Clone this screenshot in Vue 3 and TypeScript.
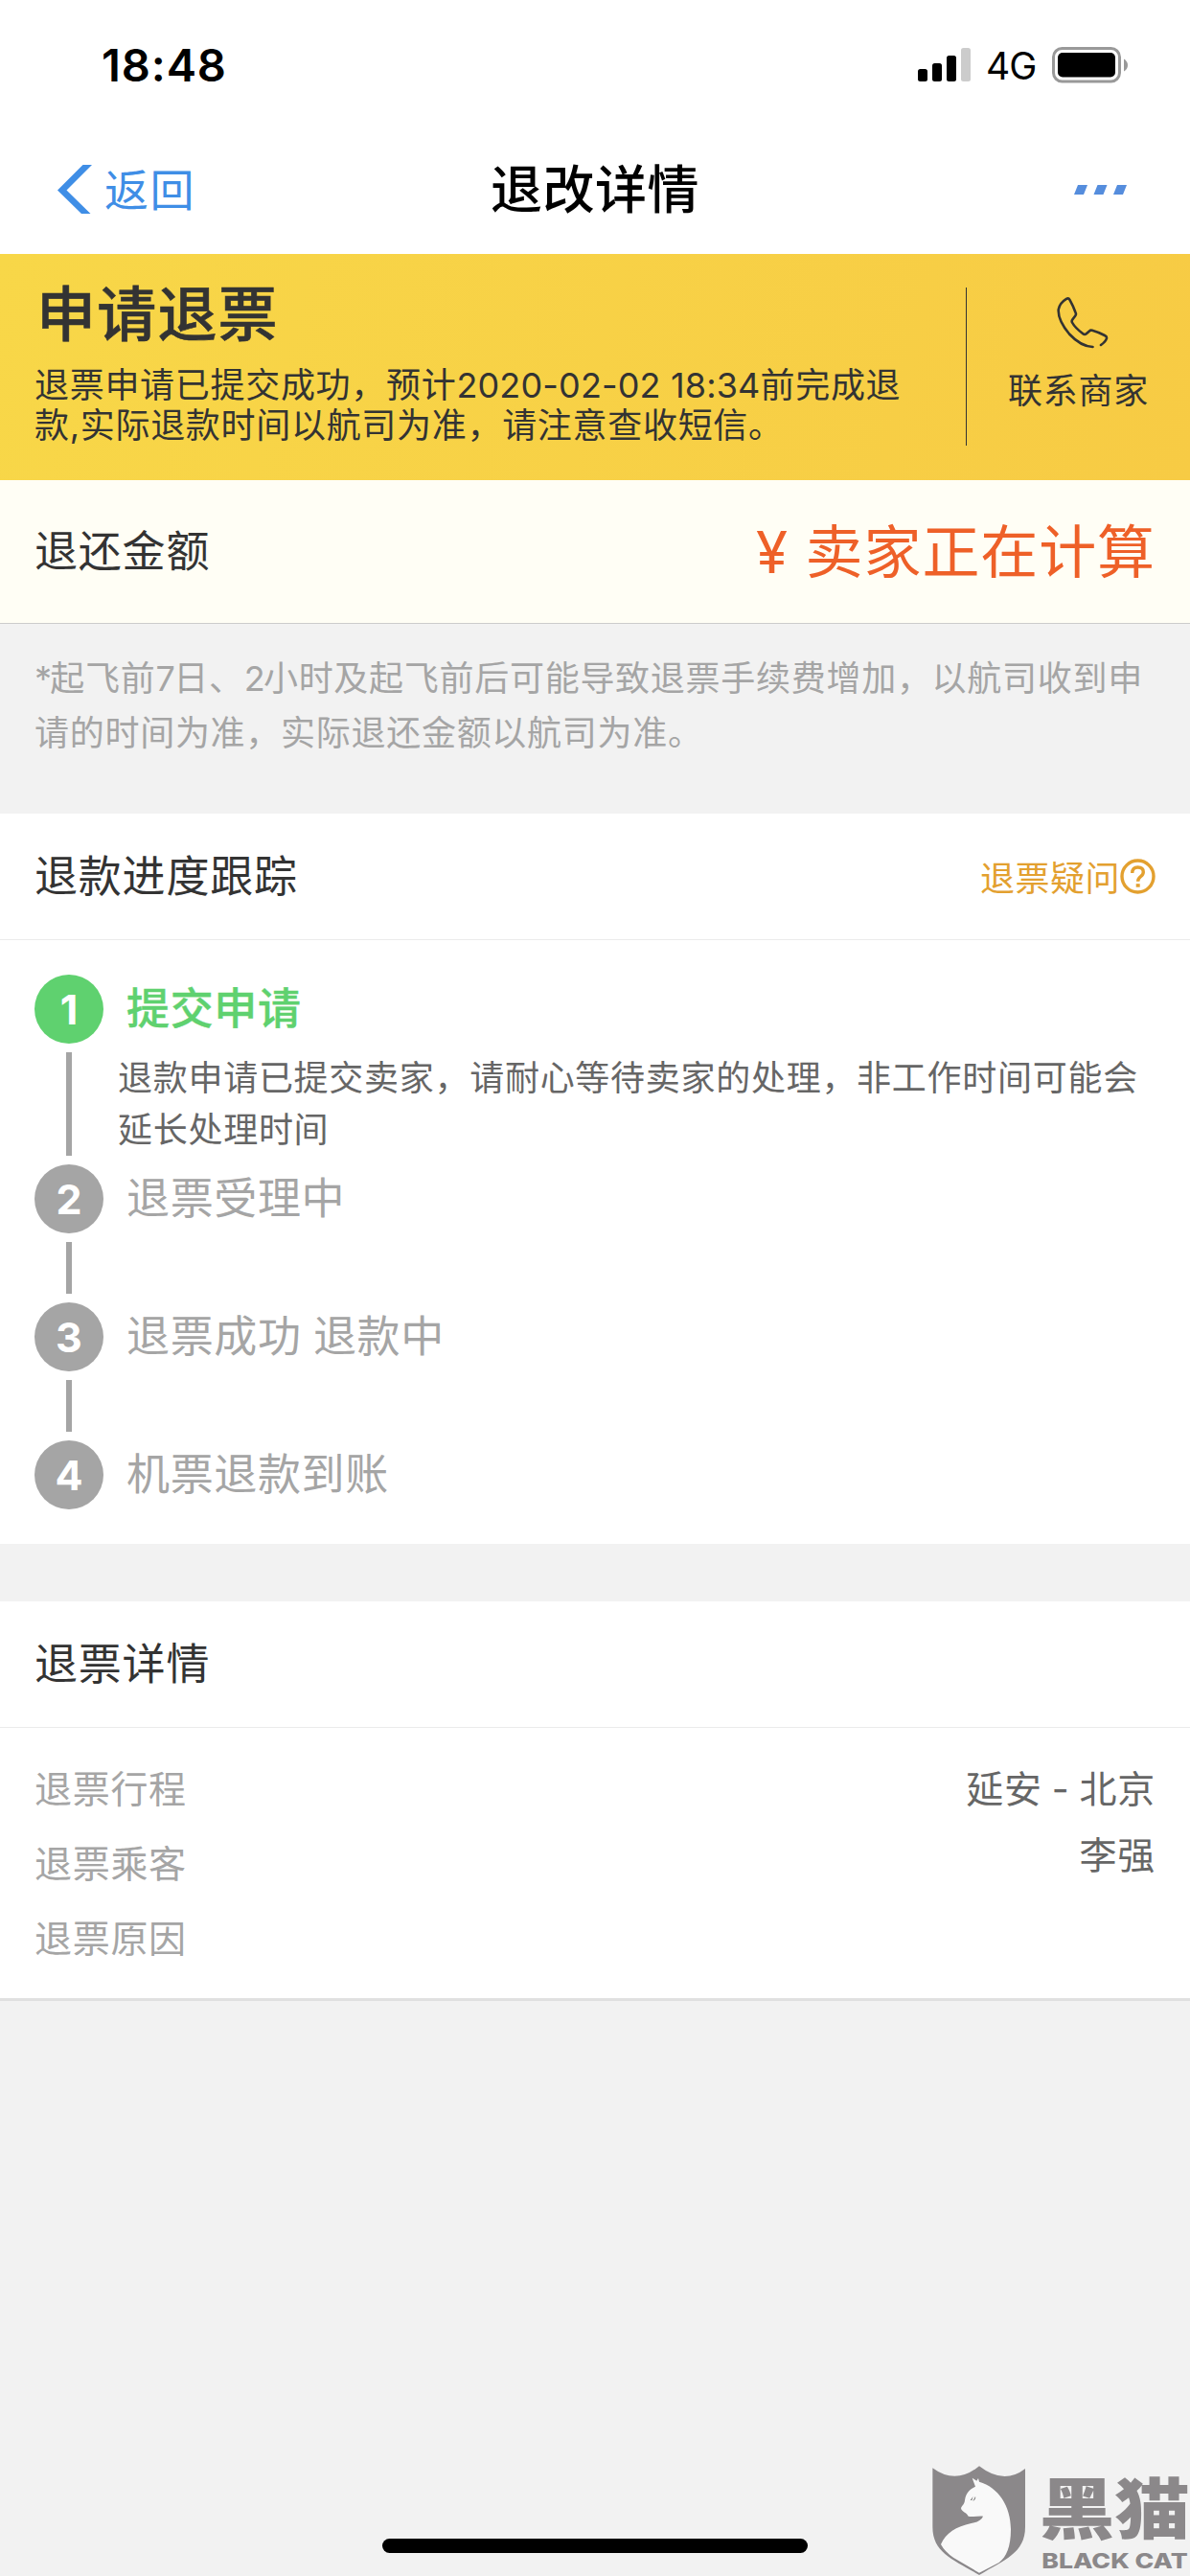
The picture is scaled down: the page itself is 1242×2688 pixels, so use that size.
<script setup lang="ts">
interface Step {
  title: string
  desc?: string
  active?: boolean
}

const steps: Step[] = [
  { title: '提交申请', desc: '退款申请已提交卖家，请耐心等待卖家的处理，非工作时间可能会延长处理时间', active: true },
  { title: '退票受理中' },
  { title: '退票成功 退款中' },
  { title: '机票退款到账' },
]

const labels: string[] = ['退票行程', '退票乘客', '退票原因']
const values: string[] = ['延安 - 北京', '李强']
</script>

<template>
  <div class="page">
    <div class="status-bar">
      <span class="time">18:48</span>
      <div class="indicators">
        <svg class="signal" width="55" height="36" viewBox="0 0 55 36">
          <rect x="0" y="22" width="10" height="13" rx="2.5" />
          <rect x="15" y="16" width="10" height="19" rx="2.5" />
          <rect x="30" y="8" width="10" height="27" rx="2.5" />
          <rect x="45" y="0" width="10" height="35" rx="2.5" fill="#ccc" />
        </svg>
        <span class="network">4G</span>
        <svg class="battery" width="80" height="38" viewBox="0 0 80 38">
          <rect x="1.5" y="1.5" width="69" height="34.5" rx="9" fill="none" stroke="#999" stroke-width="3" />
          <rect x="6" y="6" width="60" height="25.5" rx="5" />
          <path d="M75 12.5 Q79 15 79 19 Q79 23 75 25.500Z" fill="#999" />
        </svg>
      </div>
    </div>

    <nav class="nav">
      <div class="back">
        <svg width="36" height="51" viewBox="0 0 36 51">
          <path d="M26.500 0 H36 L9.500 26.500 L34.500 51 H25 L0 26.500Z" fill="#3f8ee6" />
        </svg>
        <span>返回</span>
      </div>
      <h1>退改详情</h1>
      <div class="more">
        <svg width="55" height="10" viewBox="0 0 55 10">
          <path d="M4 0H14L10 10H0Z M24.500 0H34.500L30.500 10H20.500Z M45 0H55L51 10H41Z" fill="#558ddd" />
        </svg>
      </div>
    </nav>

    <section class="banner">
      <div class="banner-text">
        <h2>申请退票</h2>
        <p>退票申请已提交成功，预计<span class="date">2020-02-02 18:34</span>前完成退<br>款,实际退款时间以航司为准，请注意查收短信。</p>
      </div>
      <div class="contact">
        <svg width="56" height="56" viewBox="-1 -1 56 56">
          <path
            d="M46 50 Q51 46.500 52 43 Q52.300 41 50 40 Q43 36.500 37 34.800 Q35 34.300 34 35.500 L30.800 38.300 Q29 39.700 27 38 Q19 32 16 26.500 Q15.200 25 16.300 23.500 L19.300 19.500 Q20.500 18 19.500 16 Q17 9 13.500 2.800 Q12.300 .6 10 1.800 Q3 6 1.700 13 Q1 24 13 38.500 Q25 51.500 37.500 52"
            fill="none" stroke="#333" stroke-width="2.600" stroke-linecap="round" stroke-linejoin="round"
          />
        </svg>
        <span>联系商家</span>
      </div>
    </section>

    <section class="amount">
      <span class="amount-label">退还金额</span>
      <span class="amount-value">¥ 卖家正在计算</span>
    </section>

    <p class="note"><span class="tight">*</span>起飞前<span class="tight">7</span>日、<span class="tight">2</span>小时及起飞前后可能导致退票手续费增加，以航司收到申<br>请的时间为准，实际退还金额以航司为准。</p>

    <section class="card">
      <header class="card-head">
        <h3>退款进度跟踪</h3>
        <div class="faq">
          <span>退票疑问</span>
          <svg width="37" height="37" viewBox="0 0 37 37" fill="none" stroke="#e3a02f">
            <circle cx="18.500" cy="18.500" r="16.500" stroke-width="3.400" />
            <path d="M12.700 15 Q12.700 9 18.500 9 Q24.300 9 24.300 14 Q24.300 16.500 21.500 18.700 Q18.700 20.800 18.700 23.800" stroke-width="3.400" />
            <path d="M18.700 26.200V29.700" stroke-width="4" />
          </svg>
        </div>
      </header>
      <ol class="steps">
        <li v-for="(step, i) in steps" :key="step.title" class="step" :class="{ active: step.active }">
          <div class="rail">
            <span class="num">{{ i + 1 }}</span>
            <span v-if="i < steps.length - 1" class="line"></span>
          </div>
          <div class="step-body">
            <div class="step-title">{{ step.title }}</div>
            <p v-if="step.desc" class="step-desc">{{ step.desc }}</p>
          </div>
        </li>
      </ol>
    </section>

    <section class="card detail">
      <header class="card-head">
        <h3>退票详情</h3>
      </header>
      <div class="detail-body">
        <div class="labels">
          <span v-for="label in labels" :key="label">{{ label }}</span>
        </div>
        <div class="values">
          <span v-for="value in values" :key="value">{{ value }}</span>
        </div>
      </div>
    </section>

    <svg class="watermark" width="300" height="148" viewBox="0 0 900 444">
      <path d="M94 106 Q167 160 240 100 Q317 160 384 108 V290 C384 372 320 392 240 441 C160 392 94 372 94 290Z" fill="#8b888a" />
      <path
        d="M218 137 L232 146 L237 138 L240 149 C300 166 339 225 339 298 C339 352 325 385 302 402 L240 434 L160 387 Q132 368 120 345 C135 310 168 289 215 279 C236 275 248 268 252 257 C235 256 217 260 206 257 C202 247 184 242 183 232 C184 225 194 220 195 207 C198 185 208 174 228 164Z"
        fill="#f9f9f9"
      />
      <path d="M212 207 L221 195 L217 207Z M220 210 L228 195 Q231 205 220 210Z" fill="#777" />
      <text class="wm-cn" transform="translate(428 311) scale(1.135 1)">黑猫</text>
      <text class="wm-en" x="436" y="420" textLength="457" lengthAdjust="spacingAndGlyphs">BLACK CAT</text>
    </svg>
    <div class="home-indicator"></div>
  </div>
</template>

<style>
body {
  margin: 0;
  background: #f2f2f2;
}
</style>

<style scoped>
.page {
  position: relative;
  box-sizing: border-box;
  width: 1242px;
  height: 2688px;
  overflow: hidden;
  display: flex;
  flex-direction: column;
  background: #f2f2f2;
  color: #333;
  font-family: Inter, "Noto Sans CJK SC", sans-serif;
  white-space: nowrap;
}

h1, h2, h3, p, ol {
  margin: 0;
  padding: 0;
}

.status-bar {
  height: 132px;
  box-sizing: border-box;
  padding: 49px 64px 0 106px;
  display: flex;
  justify-content: space-between;
  align-items: flex-start;
  background: #fff;
  color: #000;
}

.time {
  font-size: 47px;
  line-height: 38px;
  font-weight: 600;
  letter-spacing: 0.900px;
}

.indicators {
  display: flex;
  align-items: flex-start;
}

.signal {
  margin-top: 1px;
}

.network {
  width: 85px;
  padding-left: 16px;
  box-sizing: border-box;
  font-size: 39px;
  line-height: 40px;
  letter-spacing: -1px;
}

.nav {
  height: 133px;
  box-sizing: border-box;
  padding: 0 66px 2px 60px;
  display: grid;
  grid-template-columns: 1fr auto 1fr;
  align-items: center;
  background: #fff;
}

.back {
  display: flex;
  align-items: center;
  gap: 13px;
  color: #3f8ee6;
  font-size: 46px;
  line-height: 60px;
  letter-spacing: 1.500px;
}

h1 {
  padding: 3px 0 0 6px;
  color: #000;
  font-size: 54px;
  line-height: 60px;
  font-weight: 500;
  letter-spacing: 0.500px;
}

.more {
  display: flex;
  justify-content: flex-end;
}

.banner {
  height: 236px;
  box-sizing: border-box;
  padding-left: 36px;
  display: flex;
  background: linear-gradient(105deg, #f8d748, #f7cb44);
}

.banner-text {
  width: 972px;
  padding-top: 31px;
}

h2 {
  padding-left: 2px;
  font-size: 62px;
  line-height: 66px;
  font-weight: 500;
  -webkit-text-stroke: 0.600px #333;
  letter-spacing: 1.200px;
}

.banner-text p {
  margin-top: 19px;
  font-size: 36px;
  line-height: 42px;
  letter-spacing: 0.700px;
}

.date {
  letter-spacing: 0.150px;
}

.contact {
  flex: 1;
  height: 165px;
  box-sizing: border-box;
  margin-top: 35px;
  padding-top: 9px;
  border-left: 1px solid #333;
  display: flex;
  flex-direction: column;
  align-items: center;
  gap: 19px;
  font-size: 36px;
  line-height: 48px;
  letter-spacing: 0.700px;
}

.contact svg {
  margin-left: 8px;
}

.amount {
  height: 150px;
  box-sizing: border-box;
  padding: 0 36px;
  border-bottom: 1px solid #ccc;
  display: flex;
  align-items: center;
  justify-content: space-between;
  background: #fffef5;
}

.amount-label {
  font-size: 45px;
  letter-spacing: 0.800px;
  line-height: 60px;
}

.amount-value {
  color: #ee6028;
  font-size: 60px;
  line-height: 80px;
  letter-spacing: 0.900px;
}

.note {
  height: 198px;
  box-sizing: border-box;
  padding: 29px 36px 0;
  color: #a5a5a5;
  font-size: 36px;
  line-height: 57px;
  letter-spacing: 0.720px;
}

.tight {
  letter-spacing: -1.700px;
}

.card {
  background: #fff;
}

.card-head {
  height: 132px;
  box-sizing: border-box;
  padding: 0 36px;
  border-bottom: 1px solid #ebebeb;
  display: flex;
  align-items: center;
  justify-content: space-between;
}

h3 {
  font-size: 45px;
  line-height: 60px;
  font-weight: 400;
  letter-spacing: 0.800px;
}

.faq {
  display: flex;
  align-items: center;
  color: #e3a02f;
  font-size: 36px;
  line-height: 48px;
  letter-spacing: 0.500px;
}

.faq span {
  padding-top: 4px;
}

.steps {
  list-style: none;
  padding: 36px 36px;
}

.step {
  display: flex;
}

.rail {
  width: 72px;
  display: flex;
  flex-direction: column;
  align-items: center;
}

.num {
  width: 72px;
  height: 72px;
  border-radius: 50%;
  background: #a5a5a5;
  color: #fff;
  font-size: 43px;
  line-height: 72px;
  font-weight: 700;
  text-align: center;
}

.active .num {
  background: #5fd16f;
}

.line {
  width: 6px;
  height: 54px;
  margin: 9px 0;
  background: #a5a5a5;
}

.active .line {
  height: 108px;
}

.step-body {
  padding-left: 15px;
  flex: 1;
}

.step-title {
  padding-left: 9px;
  font-size: 45px;
  line-height: 72px;
  letter-spacing: 0.650px;
  word-spacing: -1px;
  color: #a5a5a5;
}

.active .step-title {
  color: #5fd16f;
  font-weight: 500;
  -webkit-text-stroke: 0.400px #5fd16f;
}

.step-desc {
  width: 1082px;
  margin-top: 9px;
  margin-bottom: -20px;
  color: #666;
  font-size: 36px;
  line-height: 54px;
  letter-spacing: 0.720px;
  white-space: normal;
}

.detail {
  margin-top: 60px;
  border-bottom: 3px solid #e0e0e0;
}

.detail-body {
  height: 282px;
  box-sizing: border-box;
  padding: 25px 36px 0;
  display: flex;
  justify-content: space-between;
  font-size: 39px;
  letter-spacing: 0.700px;
}

.labels,
.values {
  display: flex;
  flex-direction: column;
}

.labels {
  color: #a5a5a5;
  line-height: 78px;
}

.values {
  padding-top: 4px;
  color: #666;
  line-height: 69px;
  text-align: right;
  word-spacing: -1.500px;
}

.watermark {
  position: absolute;
  right: 0;
  bottom: 0;
}

.wm-cn {
  font-family: "Noto Sans CJK SC", sans-serif;
  font-size: 208px;
  font-weight: 900;
  fill: #8b888a;
}

.wm-en {
  font-family: Inter, sans-serif;
  font-size: 65px;
  font-weight: 800;
  fill: #8b888a;
}

.home-indicator {
  position: absolute;
  left: 399px;
  bottom: 24px;
  width: 444px;
  height: 15px;
  border-radius: 8px;
  background: #000;
}
</style>
